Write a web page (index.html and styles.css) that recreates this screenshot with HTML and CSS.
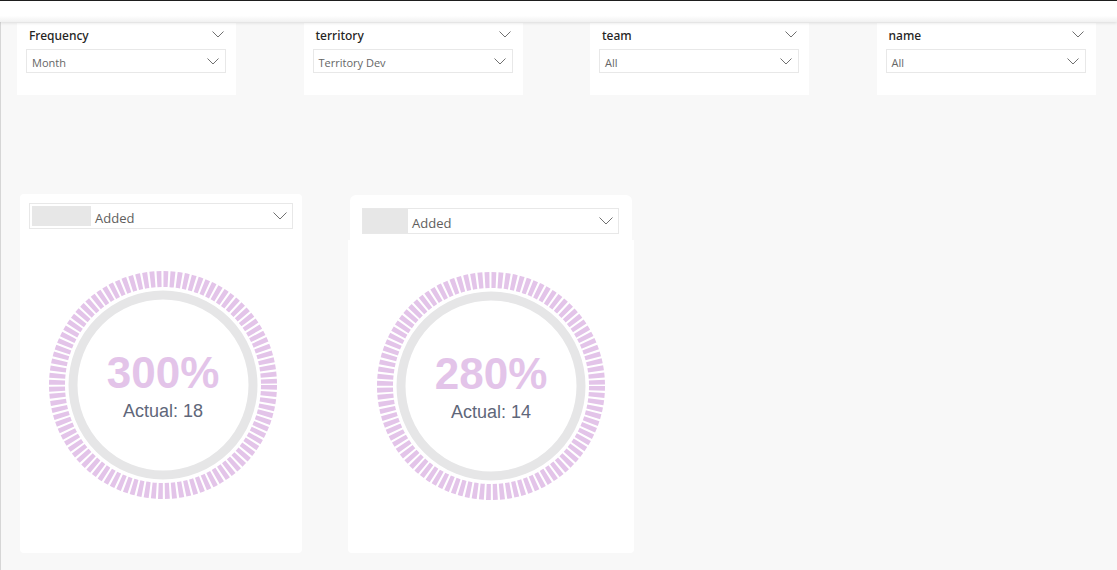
FILE: index.html
```html
<!DOCTYPE html>
<html lang="en">
<head>
    <meta charset="UTF-8">
    <meta name="viewport" content="width=device-width, initial-scale=1.0">
    <title>Report</title>
    <link rel="stylesheet" href="styles.css">
</head>
<body>
    <header class="topbar"></header>

    <main class="canvas">
        <!-- Slicers -->
        <section class="filters">
            <div class="slicer">
                <div class="slicer-head">
                    <span class="slicer-title">Frequency</span>
                    <svg class="chev" width="12" height="7" viewBox="0 0 12 7"><polyline points="0.5,0.5 6,6 11.5,0.5"/></svg>
                </div>
                <div class="select">
                    <span>Month</span>
                    <svg class="chev" width="12" height="7" viewBox="0 0 12 7"><polyline points="0.5,0.5 6,6 11.5,0.5"/></svg>
                </div>
            </div>
            <div class="slicer">
                <div class="slicer-head">
                    <span class="slicer-title">territory</span>
                    <svg class="chev" width="12" height="7" viewBox="0 0 12 7"><polyline points="0.5,0.5 6,6 11.5,0.5"/></svg>
                </div>
                <div class="select">
                    <span>Territory Dev</span>
                    <svg class="chev" width="12" height="7" viewBox="0 0 12 7"><polyline points="0.5,0.5 6,6 11.5,0.5"/></svg>
                </div>
            </div>
            <div class="slicer">
                <div class="slicer-head">
                    <span class="slicer-title">team</span>
                    <svg class="chev" width="12" height="7" viewBox="0 0 12 7"><polyline points="0.5,0.5 6,6 11.5,0.5"/></svg>
                </div>
                <div class="select">
                    <span>All</span>
                    <svg class="chev" width="12" height="7" viewBox="0 0 12 7"><polyline points="0.5,0.5 6,6 11.5,0.5"/></svg>
                </div>
            </div>
            <div class="slicer">
                <div class="slicer-head">
                    <span class="slicer-title">name</span>
                    <svg class="chev" width="12" height="7" viewBox="0 0 12 7"><polyline points="0.5,0.5 6,6 11.5,0.5"/></svg>
                </div>
                <div class="select">
                    <span>All</span>
                    <svg class="chev" width="12" height="7" viewBox="0 0 12 7"><polyline points="0.5,0.5 6,6 11.5,0.5"/></svg>
                </div>
            </div>
        </section>

        <!-- Gauges -->
        <section class="gauges">
            <div class="gauge-card first">
                <div class="measure">
                    <span class="swatch"></span>
                    <span class="measure-label">Added</span>
                    <svg class="chev big" width="14" height="8" viewBox="0 0 14 8"><polyline points="0.5,0.5 7,7 13.5,0.5"/></svg>
                </div>
                <div class="gauge">
                    <svg class="ring" width="232" height="232" viewBox="0 0 232 232">
                        <circle class="ring-dash" cx="116" cy="116" r="106"/>
                        <circle class="ring-track" cx="116" cy="116" r="90"/>
                    </svg>
                    <div class="gauge-text">
                        <span class="pct">300%</span>
                        <span class="actual">Actual: 18</span>
                    </div>
                </div>
            </div>

            <div class="gauge-stack">
                <div class="gauge-top">
                    <div class="measure">
                        <span class="swatch"></span>
                        <span class="measure-label">Added</span>
                        <svg class="chev big" width="14" height="8" viewBox="0 0 14 8"><polyline points="0.5,0.5 7,7 13.5,0.5"/></svg>
                    </div>
                </div>
                <div class="gauge-body">
                    <div class="gauge">
                        <svg class="ring" width="232" height="232" viewBox="0 0 232 232">
                            <circle class="ring-dash" cx="116" cy="116" r="106"/>
                            <circle class="ring-track" cx="116" cy="116" r="90"/>
                        </svg>
                        <div class="gauge-text">
                            <span class="pct">280%</span>
                            <span class="actual">Actual: 14</span>
                        </div>
                    </div>
                </div>
            </div>
        </section>
    </main>
</body>
</html>
```

FILE: styles.css
```css
/* General */
* {
    margin: 0;
    padding: 0;
    box-sizing: border-box;
}
html, body {
    height: 100%;
}
body {
    background: #f8f8f8;
    font-family: 'Open Sans', 'Noto Sans', sans-serif;
    overflow: hidden;
}
.topbar {
    height: 22px;
    border-top: 1px solid #1e1e1e;
    background: linear-gradient(#fff 70%, #f1f1f1);
    box-shadow: 0 1px 3px rgba(0,0,0,.12);
    position: relative;
    z-index: 2;
}
.canvas {
    height: calc(100% - 22px);
    border-left: 1px solid #d6d6d6;
}
.chev polyline {
    fill: none;
    stroke: #707070;
    stroke-width: 1;
}

/* Slicers */
.filters {
    display: flex;
    gap: 67.5px;
    padding: 1px 0 0 16px;
}
.slicer {
    width: 219px;
    height: 72px;
    background: #fff;
    padding: 0 10px 0 9px;
}
.slicer-head {
    display: flex;
    justify-content: space-between;
    align-items: center;
    height: 26px;
    padding: 0 2px 2px 3px;
}
.slicer-head .chev {
    margin-top: -1px;
}
.slicer-title {
    font-family: 'Noto Sans', 'Open Sans', sans-serif;
    font-size: 12px;
    font-weight: 500;
    color: #252423;
}
.select {
    display: flex;
    justify-content: space-between;
    align-items: center;
    height: 24px;
    border: 1px solid #e8e8e8;
    padding: 2px 6px 0 5px;
    font-size: 11px;
    color: #666;
}
.select .chev {
    margin-top: -2px;
}

/* Gauges */
.gauges {
    display: flex;
    align-items: flex-start;
    padding-left: 19px;
    margin-top: 99px;
}
.gauge-card {
    width: 282px;
    height: 359px;
    background: #fff;
    border-radius: 4px;
    padding: 9px 9px 0;
}
.gauge-stack {
    margin-left: 46px;
    width: 286px;
    margin-top: 1px;
}
.gauge-top {
    margin: 0 2px;
    height: 45px;
    background: #fff;
    border-radius: 6px 6px 0 0;
    padding: 13px 13px 0 12px;
}
.gauge-body {
    height: 313px;
    background: #fff;
    border-radius: 0 0 4px 4px;
    padding-top: 30px;
}
.measure {
    display: flex;
    align-items: center;
    height: 26px;
    border: 1px solid #e8e8e8;
    padding: 2px 5px 2px 2px;
}
.gauge-top .measure {
    padding-left: 0;
}
.swatch {
    width: 59px;
    height: 20px;
    background: #e7e7e7;
}
.gauge-top .swatch {
    width: 45px;
    height: 24px;
}
.measure-label {
    flex: 1;
    padding: 3px 0 0 4px;
    font-size: 13px;
    color: #605e5c;
}
.gauge {
    position: relative;
    width: 232px;
    height: 232px;
    margin: 0 auto;
}
.gauge-card .gauge {
    margin: 40px 0 0 18px;
}
.ring-dash {
    fill: none;
    stroke: #e3c4e9;
    stroke-width: 16;
    stroke-dasharray: 4.6 2.06;
}
.ring-track {
    fill: none;
    stroke: #e6e6e7;
    stroke-width: 9;
}
.gauge-text {
    position: absolute;
    inset: 0;
    display: flex;
    flex-direction: column;
    align-items: center;
    padding-top: 80px;
    font-family: 'Liberation Sans', Arial, sans-serif;
}
.pct {
    font-size: 44px;
    font-weight: 700;
    color: #e3c4e9;
    line-height: 48px;
}
.actual {
    margin-top: 3px;
    font-size: 18px;
    color: #5f677a;
    line-height: 22px;
}
```
